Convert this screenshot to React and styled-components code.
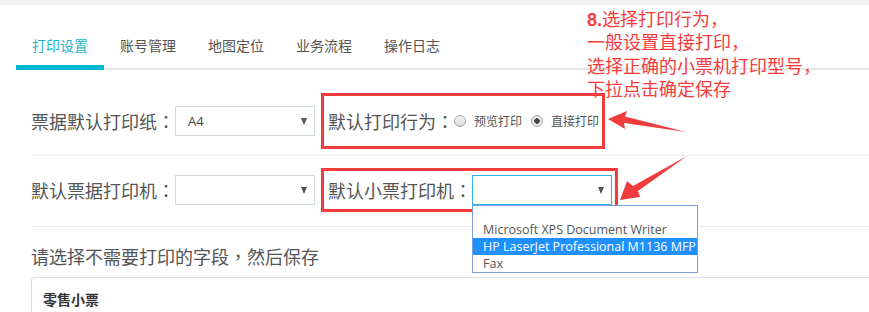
import React from "react";
import styled, { createGlobalStyle } from "styled-components";

const GlobalStyle = createGlobalStyle`
  html, body {
    margin: 0;
    padding: 0;
    background: #fff;
  }
  body {
    font-family: "Noto Sans CJK SC", "Noto Sans", sans-serif;
    color: #555;
  }
`;

const tabs = ["打印设置", "账号管理", "地图定位", "业务流程", "操作日志"];

const printers = [
  "",
  "Microsoft XPS Document Writer",
  "HP LaserJet Professional M1136 MFP",
  "Fax",
];

const notes = [
  "选择打印行为，",
  "一般设置直接打印，",
  "选择正确的小票机打印型号，",
  "下拉点击确定保存",
];

const App = () => {
  return (
    <>
      <GlobalStyle />
      <Page>
        <TopStrip />
        <Tabs>
          {tabs.map((t, i) => (
            <Tab key={t} active={i === 0}>
              {t}
            </Tab>
          ))}
        </Tabs>

        <Content>
          <Row first>
            <Label>票据默认打印纸：</Label>
            <Select>
              <span>A4</span>
              <Caret />
            </Select>
            <Highlight width={284} height={56}>
              <Label>默认打印行为：</Label>
              <RadioItem>
                <Radio />
                <span>预览打印</span>
              </RadioItem>
              <RadioItem>
                <Radio checked />
                <span>直接打印</span>
              </RadioItem>
            </Highlight>
          </Row>

          <Row>
            <Label>默认票据打印机：</Label>
            <Select>
              <span />
              <Caret />
            </Select>
            <Highlight width={297} height={44}>
              <Label>默认小票打印机：</Label>
              <SelectWrap>
                <Select focused>
                  <span />
                  <Caret />
                </Select>
                <Options>
                  {printers.map((p, i) => (
                    <Option key={i} selected={i === 2}>
                      {p}
                    </Option>
                  ))}
                </Options>
              </SelectWrap>
            </Highlight>
          </Row>

          <Heading>请选择不需要打印的字段，然后保存</Heading>
          <Card>
            <CardTitle>零售小票</CardTitle>
          </Card>
        </Content>

        <Note>
          {notes.map((n, i) => (
            <NoteLine key={n}>
              {i === 0 && <b>8.</b>}
              {n}
            </NoteLine>
          ))}
        </Note>

        <Arrows width="869" height="312" viewBox="0 0 869 312">
          <polygon points="608,119 627,111 625,116.5 686,132 624,123 625,129" />
          <polygon points="620,200 627,181 633,186 687,156 638,191 640,197" />
        </Arrows>
      </Page>
    </>
  );
};

export default App;

const Page = styled.div`
  position: relative;
  width: 869px;
  height: 312px;
  overflow: hidden;
`;

const TopStrip = styled.div`
  height: 5px;
  background: #f3f3f3;
`;

const Tabs = styled.div`
  display: flex;
  margin-left: 16px;
  height: 63px;
  border-bottom: 2px solid #e6e6e6;
`;

const Tab = styled.div`
  box-sizing: border-box;
  height: 65px;
  margin-bottom: -2px;
  padding: 30px 16px 0;
  font-size: 14px;
  line-height: 20px;
  color: ${({ active }) => (active ? "#1cb5cf" : "#555")};
  border-bottom: 5px solid ${({ active }) => (active ? "#00b7d1" : "transparent")};
`;

const Content = styled.div`
  padding-left: 31px;
`;

const Row = styled.div`
  display: flex;
  align-items: center;
  padding: ${({ first }) => (first ? "23px 0 6px" : "12px 0 14px")};
  border-bottom: 1px solid #ececec;
`;

const Label = styled.span`
  flex-shrink: 0;
  font-family: "Noto Sans CJK TC", "Noto Sans CJK SC", sans-serif;
  font-size: 18px;
  line-height: 24px;
  color: #555;
  white-space: nowrap;
`;

const Select = styled.div`
  box-sizing: border-box;
  flex-shrink: 0;
  width: 140px;
  height: 30px;
  display: flex;
  align-items: center;
  justify-content: space-between;
  padding: 0 7px 0 12px;
  border: 1px solid ${({ focused }) => (focused ? "#2bb3e3" : "#cfdada")};
  background: #fff;
  font-family: "Open Sans", sans-serif;
  font-size: 13px;
  color: #444;
`;

const Caret = styled.i`
  width: 0;
  height: 0;
  border-left: 3.5px solid transparent;
  border-right: 3.5px solid transparent;
  border-top: 7px solid #555;
`;

const Highlight = styled.div`
  box-sizing: border-box;
  flex-shrink: 0;
  width: ${({ width }) => width}px;
  height: ${({ height }) => height}px;
  margin-left: 6px;
  padding: 0 3px 0 4px;
  display: flex;
  align-items: center;
  border: 3px solid #f23c3c;
`;

const RadioItem = styled.label`
  display: flex;
  align-items: center;
  flex-shrink: 0;
  gap: 8px;
  margin-right: 9px;
  font-size: 12px;
  line-height: 16px;
  color: #555;
  white-space: nowrap;
`;

const Radio = styled.span`
  box-sizing: border-box;
  flex-shrink: 0;
  width: 12px;
  height: 12px;
  border-radius: 50%;
  border: 1px solid #a8a8a8;
  background: ${({ checked }) =>
    checked
      ? "radial-gradient(circle, #444 0 2.5px, #e9e9e9 3px)"
      : "linear-gradient(#f4f4f4, #d9d9d9)"};
`;

const SelectWrap = styled.div`
  position: relative;
  flex-shrink: 0;
`;

const Options = styled.div`
  position: absolute;
  top: 100%;
  left: 0;
  width: 226px;
  box-sizing: border-box;
  border: 1px solid #7c9ed8;
  background: #fff;
  z-index: 2;
`;

const Option = styled.div`
  height: ${({ children }) => (children ? 17 : 15)}px;
  line-height: 17px;
  padding-left: 10px;
  font-family: "Open Sans", sans-serif;
  font-size: 12.5px;
  white-space: nowrap;
  color: ${({ selected }) => (selected ? "#fff" : "#555")};
  background: ${({ selected }) => (selected ? "#1e90ff" : "transparent")};
`;

const Heading = styled.div`
  margin-top: 17px;
  font-family: "Noto Sans CJK TC", "Noto Sans CJK SC", sans-serif;
  font-size: 18px;
  line-height: 24px;
  color: #555;
`;

const Card = styled.div`
  margin-top: 9px;
  height: 60px;
  border: 1px solid #dedede;
  border-right: none;
  border-radius: 4px 0 0 0;
`;

const CardTitle = styled.div`
  padding: 11px 0 0 11px;
  font-size: 14px;
  line-height: 20px;
  font-weight: bold;
  color: #333;
`;

const Note = styled.div`
  position: absolute;
  top: 7px;
  left: 587px;
  font-size: 18px;
  color: #f53b3b;
  white-space: nowrap;

  b {
    font-family: "Liberation Sans", sans-serif;
    font-weight: bold;
  }
`;

const NoteLine = styled.div`
  height: 23.4px;
  line-height: 22px;
`;

const Arrows = styled.svg`
  position: absolute;
  top: 0;
  left: 0;
  pointer-events: none;

  polygon {
    fill: #f03c3c;
  }
`;
